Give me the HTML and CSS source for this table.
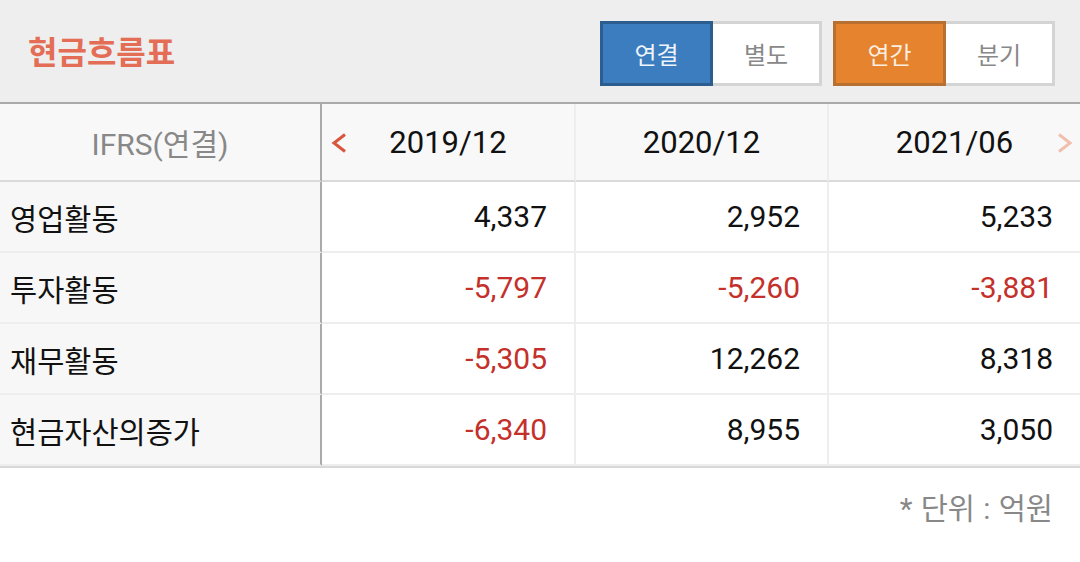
FILE: index.html
```html
<!DOCTYPE html>
<html lang="ko">
<head>
<meta charset="utf-8">
<link rel="stylesheet" href="styles.css">
</head>
<body>
<div class="page">
  <header class="top">
    <h1 class="title">현금흐름표</h1>
    <div class="toggles">
      <div class="seg">
        <span class="btn blue">연결</span>
        <span class="btn plain">별도</span>
      </div>
      <div class="seg">
        <span class="btn orange">연간</span>
        <span class="btn plain">분기</span>
      </div>
    </div>
  </header>
  <div class="grid">
    <div class="cell label head">IFRS(연결)</div>
    <div class="cell head date">
      <svg class="arrow left" width="16" height="20" viewBox="0 0 16 20"><path d="M14 1.5 L3 10 L14 18.5" fill="none" stroke="#d9553b" stroke-width="3"/></svg>
      2019/12
    </div>
    <div class="cell head date">2020/12</div>
    <div class="cell head date last">2021/06
      <svg class="arrow right" width="16" height="20" viewBox="0 0 16 20"><path d="M2 1.5 L13 10 L2 18.5" fill="none" stroke="#f0bfae" stroke-width="3"/></svg>
    </div>

    <div class="cell label">영업활동</div>
    <div class="cell num">4,337</div>
    <div class="cell num">2,952</div>
    <div class="cell num last">5,233</div>

    <div class="cell label">투자활동</div>
    <div class="cell num neg">-5,797</div>
    <div class="cell num neg">-5,260</div>
    <div class="cell num neg last">-3,881</div>

    <div class="cell label">재무활동</div>
    <div class="cell num neg">-5,305</div>
    <div class="cell num">12,262</div>
    <div class="cell num last">8,318</div>

    <div class="cell label">현금자산의증가</div>
    <div class="cell num neg">-6,340</div>
    <div class="cell num">8,955</div>
    <div class="cell num last">3,050</div>
  </div>
  <div class="unit">* 단위 : 억원</div>
</div>
</body>
</html>
```

FILE: styles.css
```css
* { box-sizing: border-box; margin: 0; padding: 0; }
html, body { width: 1080px; height: 562px; overflow: hidden; background: #ffffff; }
body { font-family: Roboto, "Noto Sans CJK KR", sans-serif; color: #111111; }

.top {
  height: 104px;
  background: #eeeeee;
  border-bottom: 2px solid #aaaaaa;
  display: flex;
  align-items: center;
  justify-content: space-between;
  padding: 0 25px 0 28px;
}
.title {
  font-family: "Noto Sans CJK KR", sans-serif;
  font-size: 32px;
  font-weight: 700;
  color: #e36d55;
  letter-spacing: 0;
  margin-top: -2px;
}
.toggles { display: flex; gap: 11px; margin-top: 4px; }
.seg { display: flex; }
.btn {
  display: flex;
  align-items: center;
  justify-content: center;
  height: 65px;
  font-family: "Noto Sans CJK KR", sans-serif;
  font-size: 24px;
  border: 3px solid #d4d4d4;
}
.btn.blue { width: 113px; background: #3b7dbf; border-color: #2b5d8f; color: #eef4fa; }
.btn.orange { width: 113px; background: #e5832f; border-color: #b87030; color: #fbeee0; }
.btn.plain { width: 109px; background: #ffffff; border-left: 0; color: #888888; }

.grid {
  display: grid;
  grid-template-columns: 322px 254px 253px 1fr;
  grid-template-rows: 78px repeat(4, 71px);
  border-bottom: 2px solid #d8d8d8;
}
.cell {
  display: flex;
  align-items: center;
  font-size: 30px;
  border-right: 2px solid #eeeeee;
  border-bottom: 2px solid #eeeeee;
  background: #ffffff;
}
.cell.last { border-right: 0; }
.cell.label {
  background: #f7f7f7;
  border-right: 2px solid #aaaaaa;
  padding-left: 10px;
  font-family: "Noto Sans CJK KR", sans-serif;
  font-size: 29.5px;
}
.cell.head {
  background: #f8f8f8;
  border-bottom-color: #dadada;
  justify-content: center;
  position: relative;
}
.cell.label.head { color: #888888; padding-left: 0; font-family: Roboto, "Noto Sans CJK KR", sans-serif; font-size: 30px; }
.cell.date { font-size: 31px; }
.arrow { position: absolute; top: 50%; margin-top: -9px; }
.arrow.left { left: 9px; }
.arrow.right { right: 7px; }
.cell.num { justify-content: flex-end; padding-right: 27px; }
.cell.neg { color: #c4302a; }

.unit {
  text-align: right;
  padding: 17px 27px 0 0;
  font-family: Roboto, "Noto Sans CJK KR", sans-serif;
  font-size: 29.5px;
  word-spacing: 1px;
  color: #888888;
}
```
